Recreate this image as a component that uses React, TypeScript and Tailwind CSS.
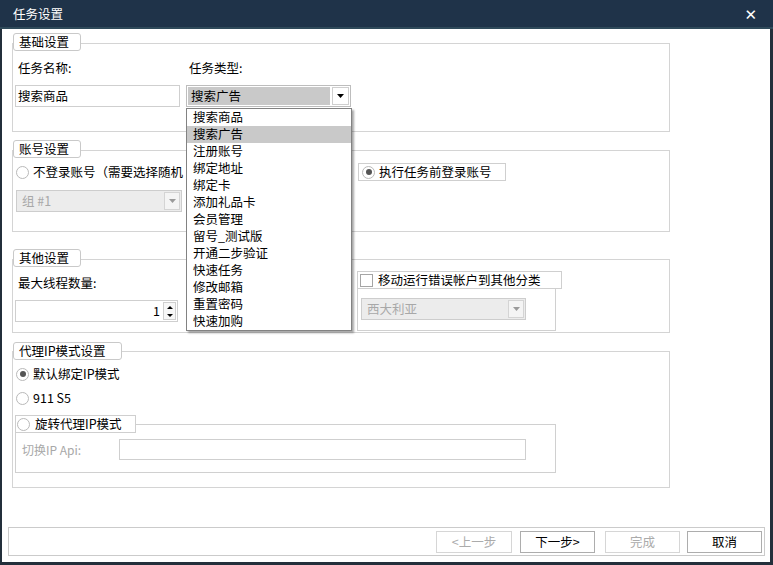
import React from "react";

const FONT = "font-['Noto_Sans_CJK_SC','Noto_Sans',sans-serif]";

function Radio({ checked }: { checked?: boolean }) {
  return (
    <span className="inline-flex items-center justify-center w-[13px] h-[13px] rounded-full border border-[#b9b9b9] bg-white shrink-0">
      {checked && <span className="w-[6px] h-[6px] rounded-full bg-[#555]" />}
    </span>
  );
}

function Arrow({ color = "#000" }: { color?: string }) {
  return (
    <svg width="7" height="4" viewBox="0 0 7 4">
      <polygon points="0,0 7,0 3.5,4" fill={color} />
    </svg>
  );
}

const items = [
  "搜索商品",
  "搜索广告",
  "注册账号",
  "绑定地址",
  "绑定卡",
  "添加礼品卡",
  "会员管理",
  "留号_测试版",
  "开通二步验证",
  "快速任务",
  "修改邮箱",
  "重置密码",
  "快速加购",
];

function Tab({ children, w }: { children: React.ReactNode; w: string }) {
  return (
    <div
      className={`relative z-10 ml-[1px] h-[18px] ${w} pl-[5px] bg-white border border-[#c9c9c9] rounded-[3px] text-[12.5px] leading-[16px] whitespace-nowrap`}
    >
      {children}
    </div>
  );
}

function DisabledSelect({ text, w }: { text: string; w: string }) {
  return (
    <div className={`flex h-[22px] ${w} border border-[#cdcdcd] bg-[#ececec] p-[1px]`}>
      <div className="flex-1 pl-[4px] text-[12.5px] leading-[18px] text-[#a8a8a8]">{text}</div>
      <div className="w-[16px] flex items-center justify-center border border-[#d4d4d4] bg-[#f4f4f4]">
        <Arrow color="#9a9a9a" />
      </div>
    </div>
  );
}

export default function App() {
  return (
    <div className={`w-[773px] h-[565px] bg-[#232f3b] flex flex-col text-black ${FONT}`}>
      {/* Title bar */}
      <div className="h-[27px] bg-[#1f3349] flex items-center justify-between pl-[13px] pr-[16px]">
        <span className="text-white text-[12.5px] leading-[16px]">任务设置</span>
        <span className="text-white font-bold text-[15px] leading-[16px] mt-[3px] font-['DejaVu_Sans',sans-serif]">✕</span>
      </div>
      <div className="h-[2px] bg-[#2f4a5a]" />

      {/* Body */}
      <div className="flex-1 bg-white ml-[2px] mr-[3px] mb-[3px] pt-[4px] flex flex-col">
        {/* Section 1 */}
        <div className="ml-[10px] w-[658px]">
          <Tab w="w-[68px]">基础设置</Tab>
          <div className="-mt-[8px] h-[89px] border border-[#d4d4d4] pt-[16px] pl-[2px]">
            <div className="flex gap-[6px]">
              <div className="w-[165px]">
                <div className="pl-[3px] h-[16px] text-[12.5px] leading-[16px]">任务名称:</div>
                <div className="mt-[9px] h-[22px] border border-[#cfcfcf] pl-[2px] text-[12.5px] leading-[20px]">
                  搜索商品
                </div>
              </div>
              <div className="w-[165px]">
                <div className="pl-[3px] h-[16px] text-[12.5px] leading-[16px]">任务类型:</div>
                <div className="relative mt-[9px]">
                  <div className="flex h-[22px] w-[165px] border border-[#bdbdbd] bg-white p-[1px]">
                    <div className="flex-1 bg-[#c9c9c9] pl-[3px] text-[12.5px] leading-[18px]">搜索广告</div>
                    <div className="ml-[2px] w-[17px] flex items-center justify-center border border-[#cfcfcf] bg-white">
                      <Arrow />
                    </div>
                  </div>
                  <div className="absolute z-50 left-0 top-[23px] w-[166px] border border-[#828282] bg-white shadow-[2px_2px_2px_rgba(0,0,0,0.35)]">
                    {items.map((t) => (
                      <div
                        key={t}
                        className={`h-[17px] pl-[6px] text-[12.5px] leading-[16px] ${
                          t === "搜索广告" ? "bg-[#c9c9c9]" : ""
                        }`}
                      >
                        {t}
                      </div>
                    ))}
                  </div>
                </div>
              </div>
            </div>
          </div>
        </div>

        {/* Section 2 */}
        <div className="ml-[10px] w-[658px] mt-[8px]">
          <Tab w="w-[68px]">账号设置</Tab>
          <div className="-mt-[8px] h-[82px] border border-[#d4d4d4] pt-[12px] pl-[3px]">
            <div className="flex items-center h-[18px]">
              <div className="w-[171px] flex items-center gap-[4px] overflow-hidden whitespace-nowrap">
                <Radio />
                <span className="text-[12.5px] leading-[16px]">不登录账号（需要选择随机</span>
              </div>
              <div className="w-[171px]" />
              <div className="h-[18px] w-[148px] border border-[#cfcfcf] flex items-center pl-[3px] gap-[4px]">
                <Radio checked />
                <span className="text-[12.5px] leading-[16px] whitespace-nowrap">执行任务前登录账号</span>
              </div>
            </div>
            <div className="mt-[9px]">
              <DisabledSelect text="组 #1" w="w-[166px]" />
            </div>
          </div>
        </div>

        {/* Section 3 */}
        <div className="ml-[10px] w-[658px] mt-[17px]">
          <Tab w="w-[68px]">其他设置</Tab>
          <div className="-mt-[8px] h-[74px] border border-[#d4d4d4] flex">
            <div className="w-[344px] pl-[2px] pt-[15px]">
              <div className="pl-[3px] h-[16px] text-[12.5px] leading-[16px]">最大线程数量:</div>
              <div className="mt-[9px] h-[22px] w-[163px] border border-[#cfcfcf] flex items-center justify-end pr-[1px]">
                <span className="text-[12.5px] leading-[16px] mr-[3px]">1</span>
                <div className="w-[13px] h-[18px] border border-[#cfcfcf] flex flex-col items-center justify-around bg-[#f7f7f7]">
                  <svg width="6" height="3" viewBox="0 0 6 3">
                    <polygon points="0,3 6,3 3,0" fill="#000" />
                  </svg>
                  <svg width="6" height="3" viewBox="0 0 6 3">
                    <polygon points="0,0 6,0 3,3" fill="#000" />
                  </svg>
                </div>
              </div>
            </div>
            <div className="pt-[11px] w-[205px]">
              <div className="relative z-10 h-[18px] w-[205px] border border-[#cfcfcf] bg-white flex items-center pl-[2px] gap-[5px]">
                <span className="w-[13px] h-[13px] border border-[#a5a5a5] bg-white shrink-0" />
                <span className="text-[12.5px] leading-[16px] whitespace-nowrap">移动运行错误帐户到其他分类</span>
              </div>
              <div className="-mt-[9px] h-[51px] w-[199px] border border-[#d0d0d0] pt-[17px] pl-[3px]">
                <DisabledSelect text="西大利亚" w="w-[165px]" />
              </div>
            </div>
          </div>
        </div>

        {/* Section 4 */}
        <div className="ml-[10px] w-[658px] mt-[9px]">
          <Tab w="w-[109px]">代理IP模式设置</Tab>
          <div className="-mt-[9px] h-[137px] border border-[#d4d4d4] pt-[14px] pl-[2px]">
            <div className="flex items-center h-[16px] gap-[4px] pl-[1px]">
              <Radio checked />
              <span className="text-[12.5px] leading-[16px]">默认绑定IP模式</span>
            </div>
            <div className="flex items-center h-[16px] gap-[4px] pl-[1px] mt-[8px]">
              <Radio />
              <span className="text-[12.5px] leading-[16px]">911 S5</span>
            </div>
            <div className="mt-[9px]">
              <div className="relative z-10 h-[18px] w-[121px] border border-[#cfcfcf] bg-white flex items-center pl-[1px] gap-[5px]">
                <Radio />
                <span className="text-[12.5px] leading-[16px] whitespace-nowrap">旋转代理IP模式</span>
              </div>
              <div className="-mt-[9px] h-[49px] w-[541px] border border-[#d0d0d0] pt-[14px] pl-[6px] flex items-start">
                <span className="w-[97px] text-[12px] leading-[21px] text-[#a8a8a8]">切换IP Api:</span>
                <div className="h-[21px] w-[407px] border border-[#cfcfcf] bg-white" />
              </div>
            </div>
          </div>
        </div>

        {/* Bottom panel */}
        <div className="ml-[6px] mt-[39px] w-[757px] h-[29px] border border-[#cbcbcb] flex items-center justify-end pr-[2px]">
          <div className="h-[22px] w-[76px] border border-[#d6d6d6] bg-white flex items-center justify-center text-[12.5px] leading-[16px] text-[#ababab]">
            &lt;上一步
          </div>
          <div className="ml-[8px] h-[22px] w-[75px] border border-[#adadad] bg-white flex items-center justify-center text-[12.5px] leading-[16px]">
            下一步&gt;
          </div>
          <div className="ml-[10px] h-[22px] w-[75px] border border-[#d6d6d6] bg-white flex items-center justify-center text-[12.5px] leading-[16px] text-[#ababab]">
            完成
          </div>
          <div className="ml-[7px] h-[22px] w-[75px] border border-[#adadad] bg-white flex items-center justify-center text-[12.5px] leading-[16px]">
            取消
          </div>
        </div>
      </div>
    </div>
  );
}
